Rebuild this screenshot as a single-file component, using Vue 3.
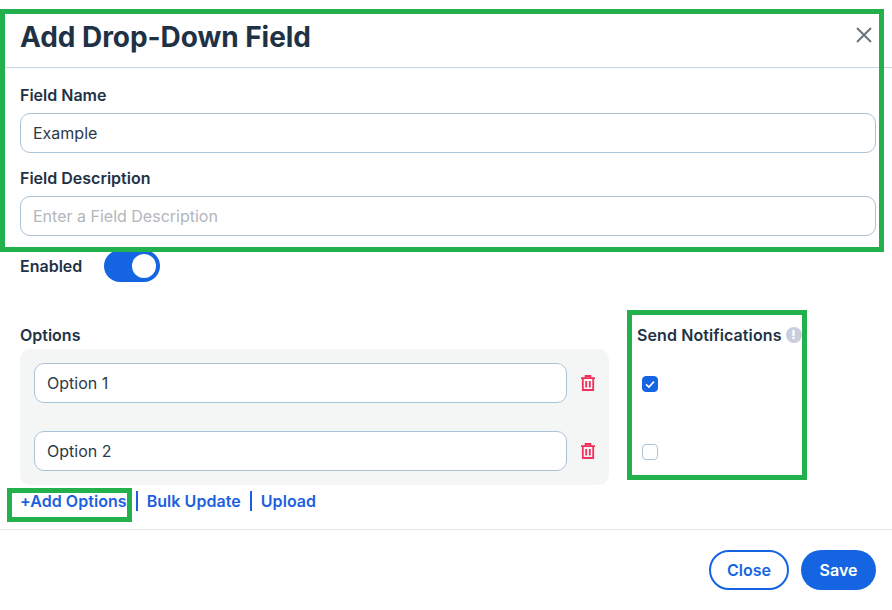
<template>
  <div class="modal">
    <!-- 头部 -->
    <header class="modal-header">
      <h1>Add Drop-Down Field</h1>
      <svg class="close-icon" viewBox="0 0 16 16" width="16" height="16">
        <path d="M1 1L15 15M15 1L1 15" stroke="#6b747c" stroke-width="2" fill="none" />
      </svg>
    </header>

    <section class="modal-body">
      <label class="field-label">Field Name</label>
      <input class="text-input" v-model="fieldName" />
      <label class="field-label second">Field Description</label>
      <input class="text-input" v-model="fieldDescription" placeholder="Enter a Field Description" />

      <div class="enabled-row">
        <span class="enabled-label">Enabled</span>
        <div class="toggle" :class="{ on: enabled }" @click="enabled = !enabled">
          <span class="knob"></span>
        </div>
      </div>

      <div class="options-area">
        <div class="options-col">
          <div class="field-label">Options</div>
          <div class="options-panel">
            <div class="option-row" v-for="option in options" :key="option.id">
              <input class="text-input" v-model="option.label" />
              <svg class="trash" viewBox="0 0 14 16" width="14" height="16">
                <path d="M4.6 2.8V1h4.8v1.8M0 3.2h14M1.8 3.2V15h10.4V3.2M5.2 6v6.4M8.8 6v6.4" stroke="#f0305a" stroke-width="1.8" fill="none" />
              </svg>
            </div>
          </div>
        </div>

        <div class="notify-col">
          <div class="field-label notify-label">
            Send Notifications
            <span class="info-dot">!</span>
          </div>
          <div class="notify-list">
            <div class="notify-row" v-for="option in options" :key="option.id">
              <div class="checkbox" :class="{ checked: option.notify }" @click="option.notify = !option.notify">
                <svg v-if="option.notify" viewBox="0 0 16 16" width="16" height="16">
                  <path d="M4 8.3L6.9 11L12 5.6" stroke="#fff" stroke-width="1.6" fill="none" />
                </svg>
              </div>
            </div>
          </div>
        </div>
      </div>

      <div class="links">
        <a class="link">+Add Options</a>
        <a class="link divided">Bulk Update</a>
        <a class="link divided">Upload</a>
      </div>
    </section>

    <footer class="modal-footer">
      <button class="btn btn-outline">Close</button>
      <button class="btn btn-primary">Save</button>
    </footer>

    <!-- 绿色标注框 -->
    <div class="mark mark-fields"></div>
    <div class="mark mark-notify"></div>
    <div class="mark mark-add"></div>
  </div>
</template>

<script setup>
import { ref } from 'vue';

const fieldName = ref('Example');
const fieldDescription = ref('');
const enabled = ref(true);
const options = ref([
  { id: 1, label: 'Option 1', notify: true },
  { id: 2, label: 'Option 2', notify: false },
]);
</script>

<style>
html,
body {
  margin: 0;
  background: #fff;
}
</style>

<style scoped>
.modal {
  position: relative;
  width: 892px;
  height: 610px;
  overflow: hidden;
  background: #fff;
  font-family: Inter, "Liberation Sans", sans-serif;
  color: #1f3245;
}

.modal-header {
  display: flex;
  align-items: center;
  justify-content: space-between;
  height: 67px;
  padding: 0 20px;
  border-bottom: 1px solid #c9d6e2;
}

.modal-header h1 {
  margin: 7px 0 0;
  font-size: 28px;
  line-height: 34px;
  font-weight: 700;
  letter-spacing: -0.05px;
}

.close-icon {
  margin: 3px 0 0;
  flex: none;
}

.modal-body {
  padding: 16px 16px 0 20px;
}

.field-label {
  display: block;
  height: 22px;
  margin-bottom: 7px;
  font-size: 16px;
  line-height: 22px;
  font-weight: 600;
}

.field-label.second {
  margin-top: 14px;
}

.text-input {
  display: block;
  box-sizing: border-box;
  width: 100%;
  height: 40px;
  padding: 0 12px;
  border: 1px solid #abc3d6;
  border-radius: 10px;
  outline: none;
  background: #fff;
  font-family: inherit;
  font-size: 16px;
  color: #2b3a47;
}

.text-input::placeholder {
  color: #b3b6ba;
}

.enabled-row {
  display: flex;
  align-items: center;
  gap: 22px;
  margin-top: 14px;
}

.enabled-label {
  font-size: 16px;
  font-weight: 600;
}

.toggle {
  position: relative;
  width: 56px;
  height: 32px;
  border-radius: 16px;
  background: #1565e3;
}

.knob {
  position: absolute;
  top: 4px;
  right: 4px;
  width: 24px;
  height: 24px;
  border-radius: 50%;
  background: #fff;
}

.options-area {
  display: flex;
  gap: 28px;
  margin-top: 42px;
}

.options-col {
  width: 589px;
}

.options-col .field-label,
.notify-col .field-label {
  margin-bottom: 3px;
}

.options-panel {
  display: flex;
  flex-direction: column;
  gap: 28px;
  padding: 14px;
  border-radius: 10px;
  background: #f4f6f6;
}

.option-row {
  display: flex;
  align-items: center;
  gap: 14px;
}

.option-row .text-input {
  width: 533px;
  flex: none;
}

.trash {
  flex: none;
}

.notify-label {
  display: flex;
  align-items: center;
  gap: 4px;
  letter-spacing: 0.1px;
}

.info-dot {
  display: flex;
  align-items: center;
  justify-content: center;
  width: 16px;
  height: 16px;
  border-radius: 50%;
  background: #c9cedd;
  color: #fff;
  font-size: 12px;
  font-weight: 800;
}

.notify-list {
  display: flex;
  flex-direction: column;
  gap: 28px;
  padding: 15px 0 13px 5px;
}

.notify-row {
  display: flex;
  align-items: center;
  height: 40px;
}

.checkbox {
  box-sizing: border-box;
  width: 16px;
  height: 16px;
  border: 1px solid #abc3d6;
  border-radius: 4px;
  background: #fff;
}

.checkbox svg {
  display: block;
  margin: -1px;
}

.checkbox.checked {
  border-color: #1565e3;
  background: #1565e3;
}

.links {
  display: flex;
  align-items: center;
  height: 22px;
  margin-top: 5px;
}

.link {
  font-size: 16px;
  line-height: 20px;
  font-weight: 600;
  letter-spacing: 0.05px;
  color: #1c5fe0;
}

.link.divided {
  margin-left: 9px;
  padding-left: 9px;
  border-left: 2px solid #1c5fe0;
}

.modal-footer {
  display: flex;
  justify-content: flex-end;
  gap: 12px;
  margin-top: 17px;
  padding: 20px 16px;
  border-top: 1px solid #e2e4e6;
}

.btn {
  box-sizing: border-box;
  height: 40px;
  border-radius: 20px;
  font-family: inherit;
  font-size: 16px;
  font-weight: 600;
}

.btn-outline {
  width: 80px;
  border: 2px solid #1565e3;
  background: #fff;
  color: #1565e3;
}

.btn-primary {
  width: 75px;
  border: none;
  background: #1565e3;
  color: #fff;
}

.mark {
  position: absolute;
  box-sizing: border-box;
  border: 5px solid #22b14c;
  pointer-events: none;
}

.mark-fields {
  left: 0;
  top: 9px;
  width: 884px;
  height: 243px;
}

.mark-notify {
  left: 627px;
  top: 310px;
  width: 180px;
  height: 170px;
}

.mark-add {
  left: 7px;
  top: 488px;
  width: 125px;
  height: 34px;
}
</style>
